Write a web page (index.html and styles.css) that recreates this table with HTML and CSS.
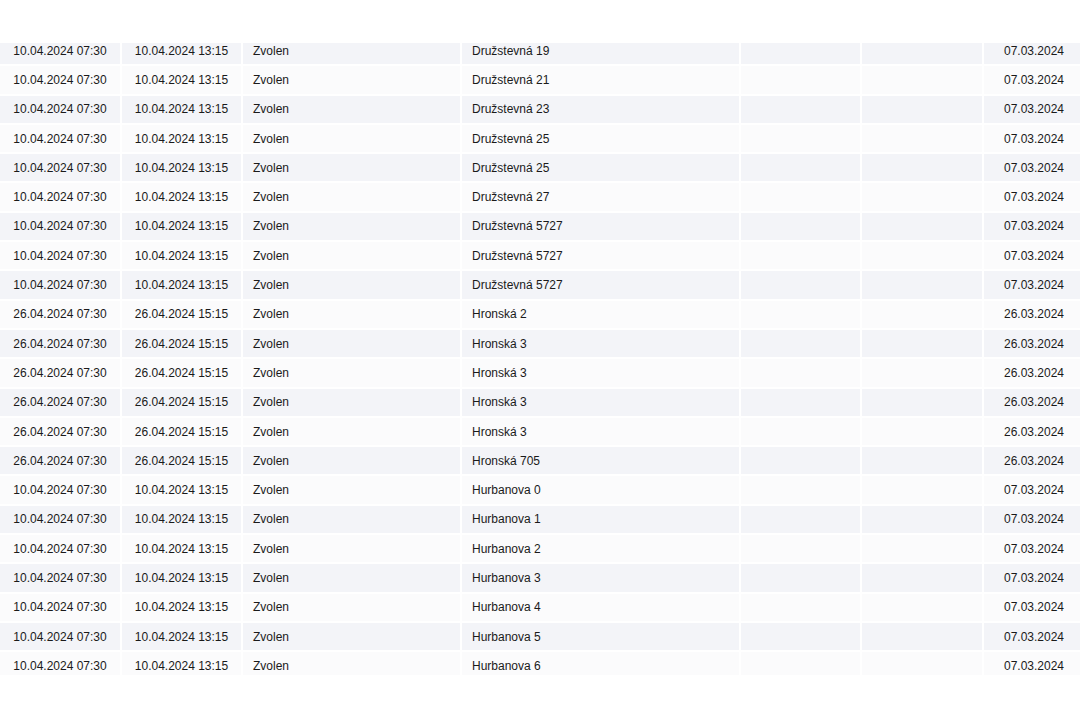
FILE: index.html
```html
<!DOCTYPE html>
<html lang="sk">
<head>
<meta charset="utf-8">
<title>Odstávky</title>
<link rel="stylesheet" href="styles.css">
</head>
<body>
<div class="page">
  <div class="scroll">
    <table class="grid">
      <colgroup>
        <col class="c-from"><col class="c-to"><col class="c-city"><col class="c-street"><col class="c-e1"><col class="c-e2"><col class="c-date">
      </colgroup>
      <tbody>
        <tr><td class="ctr">10.04.2024 07:30</td><td class="ctr">10.04.2024 13:15</td><td>Zvolen</td><td>Družstevná 19</td><td></td><td></td><td class="ctr">07.03.2024</td></tr>
        <tr><td class="ctr">10.04.2024 07:30</td><td class="ctr">10.04.2024 13:15</td><td>Zvolen</td><td>Družstevná 21</td><td></td><td></td><td class="ctr">07.03.2024</td></tr>
        <tr><td class="ctr">10.04.2024 07:30</td><td class="ctr">10.04.2024 13:15</td><td>Zvolen</td><td>Družstevná 23</td><td></td><td></td><td class="ctr">07.03.2024</td></tr>
        <tr><td class="ctr">10.04.2024 07:30</td><td class="ctr">10.04.2024 13:15</td><td>Zvolen</td><td>Družstevná 25</td><td></td><td></td><td class="ctr">07.03.2024</td></tr>
        <tr><td class="ctr">10.04.2024 07:30</td><td class="ctr">10.04.2024 13:15</td><td>Zvolen</td><td>Družstevná 25</td><td></td><td></td><td class="ctr">07.03.2024</td></tr>
        <tr><td class="ctr">10.04.2024 07:30</td><td class="ctr">10.04.2024 13:15</td><td>Zvolen</td><td>Družstevná 27</td><td></td><td></td><td class="ctr">07.03.2024</td></tr>
        <tr><td class="ctr">10.04.2024 07:30</td><td class="ctr">10.04.2024 13:15</td><td>Zvolen</td><td>Družstevná 5727</td><td></td><td></td><td class="ctr">07.03.2024</td></tr>
        <tr><td class="ctr">10.04.2024 07:30</td><td class="ctr">10.04.2024 13:15</td><td>Zvolen</td><td>Družstevná 5727</td><td></td><td></td><td class="ctr">07.03.2024</td></tr>
        <tr><td class="ctr">10.04.2024 07:30</td><td class="ctr">10.04.2024 13:15</td><td>Zvolen</td><td>Družstevná 5727</td><td></td><td></td><td class="ctr">07.03.2024</td></tr>
        <tr><td class="ctr">26.04.2024 07:30</td><td class="ctr">26.04.2024 15:15</td><td>Zvolen</td><td>Hronská 2</td><td></td><td></td><td class="ctr">26.03.2024</td></tr>
        <tr><td class="ctr">26.04.2024 07:30</td><td class="ctr">26.04.2024 15:15</td><td>Zvolen</td><td>Hronská 3</td><td></td><td></td><td class="ctr">26.03.2024</td></tr>
        <tr><td class="ctr">26.04.2024 07:30</td><td class="ctr">26.04.2024 15:15</td><td>Zvolen</td><td>Hronská 3</td><td></td><td></td><td class="ctr">26.03.2024</td></tr>
        <tr><td class="ctr">26.04.2024 07:30</td><td class="ctr">26.04.2024 15:15</td><td>Zvolen</td><td>Hronská 3</td><td></td><td></td><td class="ctr">26.03.2024</td></tr>
        <tr><td class="ctr">26.04.2024 07:30</td><td class="ctr">26.04.2024 15:15</td><td>Zvolen</td><td>Hronská 3</td><td></td><td></td><td class="ctr">26.03.2024</td></tr>
        <tr><td class="ctr">26.04.2024 07:30</td><td class="ctr">26.04.2024 15:15</td><td>Zvolen</td><td>Hronská 705</td><td></td><td></td><td class="ctr">26.03.2024</td></tr>
        <tr><td class="ctr">10.04.2024 07:30</td><td class="ctr">10.04.2024 13:15</td><td>Zvolen</td><td>Hurbanova 0</td><td></td><td></td><td class="ctr">07.03.2024</td></tr>
        <tr><td class="ctr">10.04.2024 07:30</td><td class="ctr">10.04.2024 13:15</td><td>Zvolen</td><td>Hurbanova 1</td><td></td><td></td><td class="ctr">07.03.2024</td></tr>
        <tr><td class="ctr">10.04.2024 07:30</td><td class="ctr">10.04.2024 13:15</td><td>Zvolen</td><td>Hurbanova 2</td><td></td><td></td><td class="ctr">07.03.2024</td></tr>
        <tr><td class="ctr">10.04.2024 07:30</td><td class="ctr">10.04.2024 13:15</td><td>Zvolen</td><td>Hurbanova 3</td><td></td><td></td><td class="ctr">07.03.2024</td></tr>
        <tr><td class="ctr">10.04.2024 07:30</td><td class="ctr">10.04.2024 13:15</td><td>Zvolen</td><td>Hurbanova 4</td><td></td><td></td><td class="ctr">07.03.2024</td></tr>
        <tr><td class="ctr">10.04.2024 07:30</td><td class="ctr">10.04.2024 13:15</td><td>Zvolen</td><td>Hurbanova 5</td><td></td><td></td><td class="ctr">07.03.2024</td></tr>
        <tr><td class="ctr">10.04.2024 07:30</td><td class="ctr">10.04.2024 13:15</td><td>Zvolen</td><td>Hurbanova 6</td><td></td><td></td><td class="ctr">07.03.2024</td></tr>
      </tbody>
    </table>
  </div>
</div>
</body>
</html>
```
FILE: styles.css
```css
html, body {
  margin: 0;
  padding: 0;
  background: #ffffff;
  overflow: hidden;
}

body {
  font-family: "Liberation Sans", Arial, sans-serif;
  font-size: 12px;
  color: #1a1a1a;
}

.page {
  padding-top: 43px;
  width: 1080px;
  height: 720px;
  box-sizing: border-box;
}

.scroll {
  height: 632px;
  overflow: hidden;
}

.grid {
  border-collapse: separate;
  border-spacing: 2px;
  margin-top: -8px;
  margin-left: -2px;
  table-layout: fixed;
  width: 1088px;
}

.c-from { width: 120px; }
.c-to { width: 119px; }
.c-city { width: 217px; }
.c-street { width: 277px; }
.c-e1 { width: 119px; }
.c-e2 { width: 120px; }
.c-date { width: 100px; }

.grid td {
  height: 27.3px;
  padding: 0 10px;
  box-sizing: border-box;
  white-space: nowrap;
  overflow: hidden;
  vertical-align: middle;
  background: #fbfbfc;
}

.grid tr:nth-child(odd) td {
  background: #f3f4f8;
}

.grid td.ctr {
  text-align: center;
  padding: 0;
}
```
